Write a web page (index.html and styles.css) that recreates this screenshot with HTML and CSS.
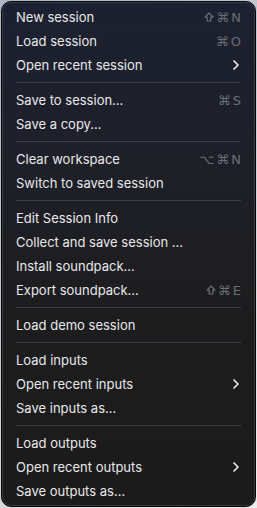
FILE: index.html
```html
<!DOCTYPE html>
<html lang="en">
<head>
    <meta charset="UTF-8">
    <meta name="viewport" content="width=device-width, initial-scale=1.0">
    <title>Session Menu</title>
    <link rel="stylesheet" href="styles.css">
</head>
<body>
    <div class="menu">
        <div class="item"><span>New session</span><span class="keys"><svg class="shift" viewBox="0 0 10 10"><path d="M5 1 L9 5.2 H6.8 V9 H3.2 V5.2 H1 Z"/></svg>⌘N</span></div>
        <div class="item"><span>Load session</span><span class="keys">⌘O</span></div>
        <div class="item"><span>Open recent session</span><svg class="chevron" viewBox="0 0 6 10"><polyline points="1,1 5,5 1,9"/></svg></div>
        <div class="sep"></div>
        <div class="item"><span>Save to session...</span><span class="keys">⌘S</span></div>
        <div class="item"><span>Save a copy...</span></div>
        <div class="sep"></div>
        <div class="item"><span>Clear workspace</span><span class="keys">⌥⌘N</span></div>
        <div class="item"><span>Switch to saved session</span></div>
        <div class="sep"></div>
        <div class="item"><span>Edit Session Info</span></div>
        <div class="item"><span>Collect and save session ...</span></div>
        <div class="item"><span>Install soundpack...</span></div>
        <div class="item"><span>Export soundpack...</span><span class="keys"><svg class="shift" viewBox="0 0 10 10"><path d="M5 1 L9 5.2 H6.8 V9 H3.2 V5.2 H1 Z"/></svg>⌘E</span></div>
        <div class="sep"></div>
        <div class="item"><span>Load demo session</span></div>
        <div class="sep"></div>
        <div class="item"><span>Load inputs</span></div>
        <div class="item"><span>Open recent inputs</span><svg class="chevron" viewBox="0 0 6 10"><polyline points="1,1 5,5 1,9"/></svg></div>
        <div class="item"><span>Save inputs as...</span></div>
        <div class="sep"></div>
        <div class="item"><span>Load outputs</span></div>
        <div class="item"><span>Open recent outputs</span><svg class="chevron" viewBox="0 0 6 10"><polyline points="1,1 5,5 1,9"/></svg></div>
        <div class="item"><span>Save outputs as...</span></div>
    </div>
</body>
</html>
```

FILE: styles.css
```css
body {
    margin: 0;
    padding: 1px;
    background: linear-gradient(135deg, #aeb6c6 0%, #c9ccd2 50%, #eeeeee 100%);
    font-family: Inter, "Open Sans", sans-serif;
    font-size: 13px;
}
.menu {
    box-sizing: border-box;
    width: 255px;
    height: 506px;
    padding: 3px 0 4px;
    border: 1px solid #050505;
    border-radius: 10px;
    box-shadow: inset 0 0 0 1px rgba(255, 255, 255, 0.13);
    background: linear-gradient(180deg, #1c2131 0%, #1e2029 30%, #1d1d1f 60%, #1b1b1b 100%);
    color: #e8e8ea;
}
.item {
    height: 24px;
    display: flex;
    align-items: center;
    justify-content: space-between;
    padding: 0 14px;
}
.keys {
    display: flex;
    align-items: center;
    gap: 2px;
    color: #6b6e76;
    letter-spacing: 2px;
    margin-right: -2px;
    font-family: "DejaVu Sans", sans-serif;
    font-size: 13px;
}
.shift {
    width: 10px;
    height: 10px;
}
.shift path {
    fill: none;
    stroke: #6b6e76;
    stroke-width: 1.2;
    stroke-linejoin: round;
}
.chevron {
    width: 6px;
    height: 10px;
    margin-right: 2px;
}
.chevron polyline {
    fill: none;
    stroke: #e8e8ea;
    stroke-width: 1.7;
    stroke-linecap: round;
    stroke-linejoin: round;
}
.sep {
    height: 1px;
    margin: 5px 14px;
    background: #3b3e46;
}
```
